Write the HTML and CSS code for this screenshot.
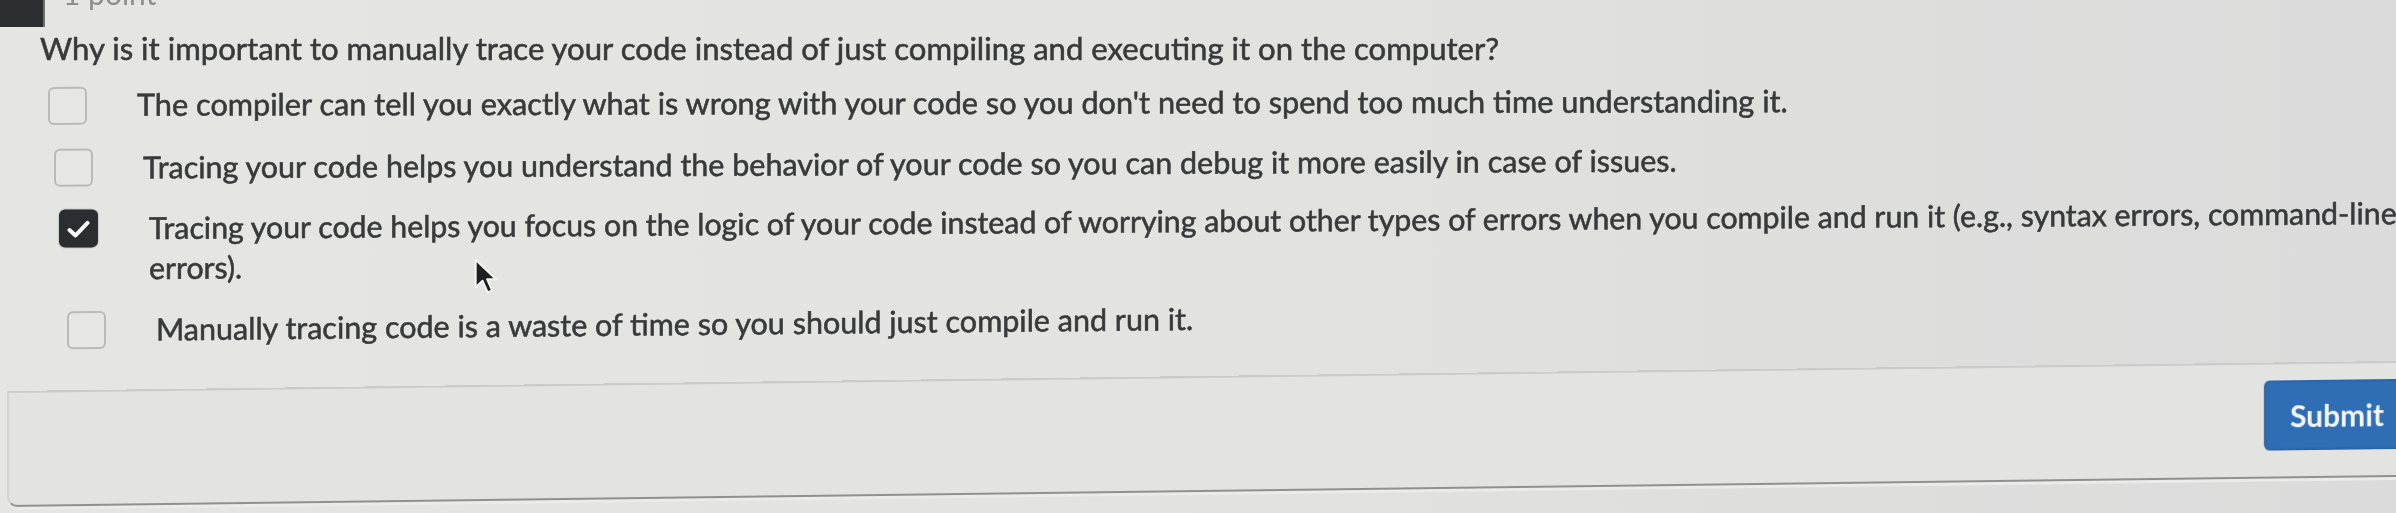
FILE: index.html
```html
<!DOCTYPE html>
<html lang="en">
<head>
<meta charset="utf-8">
<title>Question</title>
<link rel="stylesheet" href="styles.css">
</head>
<body>
<div class="page">
  <header class="topbar">
    <div class="corner"></div>
    <span class="points">1 point</span>
  </header>

  <section class="question">
    <p class="prompt">Why is it important to manually trace your code instead of just compiling and executing it on the computer?</p>
    <ul class="options">
      <li class="option row-1">
        <span class="box"></span>
        <span class="label">The compiler can tell you exactly what is wrong with your code so you don't need to spend too much time understanding it.</span>
      </li>
      <li class="option row-2">
        <span class="box"></span>
        <span class="label">Tracing your code helps you understand the behavior of your code so you can debug it more easily in case of issues.</span>
      </li>
      <li class="option row-3">
        <span class="box checked">
          <svg viewBox="0 0 39 39" width="39" height="39" aria-hidden="true"><path d="M10.5 20.5 L16.5 26 L28.5 13.5" fill="none" stroke="#ffffff" stroke-width="4" stroke-linecap="round" stroke-linejoin="round"/></svg>
        </span>
        <span class="label">Tracing your code helps you focus on the logic of your code instead of worrying about other types of errors when you compile and run it (e.g., syntax errors, command-line errors).</span>
      </li>
      <li class="option row-4">
        <span class="box"></span>
        <span class="label">Manually tracing code is a waste of time so you should just compile and run it.</span>
      </li>
    </ul>
  </section>

  <footer class="actions">
    <button class="submit" type="button">Submit</button>
  </footer>
</div>

<svg class="cursor" viewBox="0 0 14 22" width="26" height="38" aria-hidden="true">
  <path d="M1 1 L1 17 L5 13.2 L8 20 L10.6 18.8 L7.7 12.3 L12.8 12.3 Z" fill="#1e1f21" stroke="#f4f4f4" stroke-width="1.2" stroke-linejoin="round"/>
</svg>
</body>
</html>
```
FILE: styles.css
```css
html, body {
  overflow: hidden;
}

body {
  margin: 0;
  height: 513px;
  background: linear-gradient(to right, #e5e5e3 0%, #e3e3e1 45%, #dadbda 100%);
  font-family: Lato, "Open Sans", sans-serif;
  color: #38393a;
  position: relative;
}

.page {
  width: 2460px;
  display: flex;
  flex-direction: column;
  filter: blur(0.35px);
}

/* top strip: dark corner + clipped "1 point" */
.topbar {
  height: 28px;
  display: flex;
  align-items: flex-start;
  gap: 18px;
}

.corner {
  width: 45px;
  height: 27px;
  background: #2a2e30;
  border-right: 2px solid #6b6f70;
  box-sizing: border-box;
}

.points {
  font-size: 30px;
  line-height: 28px;
  margin-top: -21px;
  color: #8d8e8e;
}

/* question */
.question {
  display: flex;
  flex-direction: column;
  -webkit-text-stroke: 0.55px currentColor;
}

.prompt {
  margin: 0 0 17px 40px;
  font-size: 31.1px;
  line-height: 40px;
  white-space: nowrap;
}

.options {
  list-style: none;
  margin: 0;
  padding: 0;
  display: flex;
  flex-direction: column;
  gap: 21.5px;
}

.option {
  display: flex;
  align-items: flex-start;
  gap: 50px;
  font-size: 30.5px;
  line-height: 40px;
  transform-origin: 0 50%;
}

.row-1 { padding-left: 48px; font-size: 30.7px; transform: skewY(-0.12deg); }
.row-2 { padding-left: 54px; transform: skewY(-0.25deg); }
.row-3 { padding-left: 59px; font-size: 30.3px; transform: skewY(-0.38deg); }
.row-3 .label { padding-left: 1px; }
.row-4 { padding-left: 67px; transform: skewY(-0.58deg); }

.box {
  flex: none;
  width: 39px;
  height: 38px;
  margin-top: 2px;
  box-sizing: border-box;
  border: 2px solid #b9baba;
  border-radius: 6px;
  background: #e6e6e5;
}

.box.checked {
  border: none;
  background: #2a2e31;
  box-shadow: 0 0 2px rgba(0, 0, 0, 0.35);
  display: flex;
  align-items: center;
  justify-content: center;
}

.box.checked svg {
  display: block;
}

.label {
  flex: 1;
  min-width: 0;
}

/* bottom card with submit */
.actions {
  margin: 41px 50px 0 7px;
  height: 116px;
  box-sizing: border-box;
  border-top: 2px solid #cacbca;
  border-left: 2px solid #d2d3d2;
  border-bottom: 2px solid #8f9090;
  border-bottom-left-radius: 10px;
  background: #e3e3e1;
  display: flex;
  justify-content: flex-end;
  align-items: flex-start;
  padding-top: 16px;
  transform: skewY(-0.72deg);
  transform-origin: 0 0;
  box-shadow: 0 3px 0 #ebebea;
}

.submit {
  height: 70px;
  padding: 0 26px;
  border: none;
  border-radius: 6px;
  background: #2f6db4;
  color: #f4f6fa;
  font-family: Lato, "Open Sans", sans-serif;
  font-weight: 700;
  font-size: 30px;
  box-shadow: inset 0 0 3px rgba(20, 50, 100, 0.5);
}

/* mouse pointer lying over the page */
.cursor {
  position: absolute;
  left: 473px;
  top: 258px;
}
```
